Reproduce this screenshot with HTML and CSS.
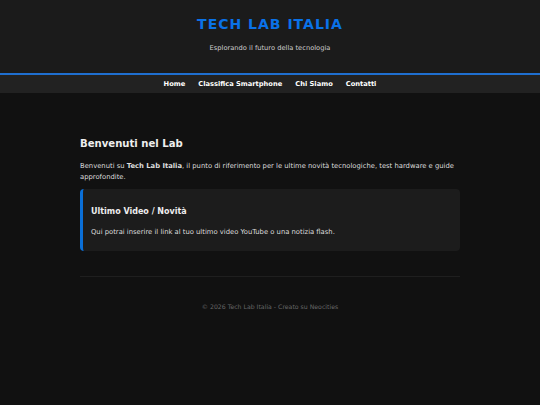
FILE: index.html
```html
<!DOCTYPE html>
<html lang="it">
<head>
<meta charset="utf-8">
<title>Tech Lab Italia</title>
<link rel="stylesheet" href="styles.css">
</head>
<body>
<header class="site-header">
  <h1 class="logo">TECH LAB ITALIA</h1>
  <p class="tagline">Esplorando il futuro della tecnologia</p>
</header>
<nav class="nav">
  <a href="#">Home</a>
  <a href="#">Classifica Smartphone</a>
  <a href="#">Chi Siamo</a>
  <a href="#">Contatti</a>
</nav>
<main class="container">
  <h2 class="title">Benvenuti nel Lab</h2>
  <p class="intro">Benvenuti su <strong>Tech Lab Italia</strong>, il punto di riferimento per le ultime novità tecnologiche, test hardware e guide approfondite.</p>
  <section class="card">
    <h3 class="card-title">Ultimo Video / Novità</h3>
    <p class="card-text">Qui potrai inserire il link al tuo ultimo video YouTube o una notizia flash.</p>
  </section>
  <hr class="divider">
  <footer class="footer">© 2026 Tech Lab Italia - Creato su Neocities</footer>
</main>
</body>
</html>
```
FILE: styles.css
```css
* { box-sizing: border-box; }
html, body {
  margin: 0;
  padding: 0;
  background: #111111;
  color: #dddddd;
  font-family: "DejaVu Sans", Verdana, sans-serif;
  font-size: 6.8px;
}
.site-header {
  background: #1b1b1b;
  text-align: center;
  padding: 16px 0 20px;
  border-bottom: 2px solid #1f6fd0;
}
.logo {
  margin: 0;
  color: #0a72e8;
  font-size: 14px;
  letter-spacing: 1px;
  line-height: 17px;
}
.tagline {
  margin: 11px 0 0;
  color: #cccccc;
  font-size: 6.7px;
  line-height: 9px;
}
.nav {
  background: #222222;
  display: flex;
  justify-content: center;
  gap: 13px;
  height: 18px;
  align-items: center;
}
.nav a {
  color: #ffffff;
  font-weight: bold;
  text-decoration: none;
  font-size: 6.7px;
}
.container {
  width: 380px;
  margin: 0 auto;
  padding-top: 44px;
}
.title {
  margin: 0;
  font-size: 10.1px;
  line-height: 14px;
  color: #eeeeee;
}
.intro {
  margin: 10px 0 0;
  line-height: 11px;
  color: #dddddd;
}
.card {
  margin-top: 6px;
  background: #1c1c1c;
  border-left: 3px solid #0a6fd8;
  border-radius: 4px;
  padding: 17px 10px 14px 8px;
}
.card-title {
  margin: 0;
  font-size: 8px;
  line-height: 12px;
  color: #eeeeee;
}
.card-text {
  margin: 9px 0 0;
  line-height: 10px;
}
.divider {
  margin: 25px 0 0;
  border: 0;
  border-top: 1px solid #1f1f1f;
}
.footer {
  text-align: center;
  color: #666666;
  padding-top: 26px;
  font-size: 6.2px;
}
```
